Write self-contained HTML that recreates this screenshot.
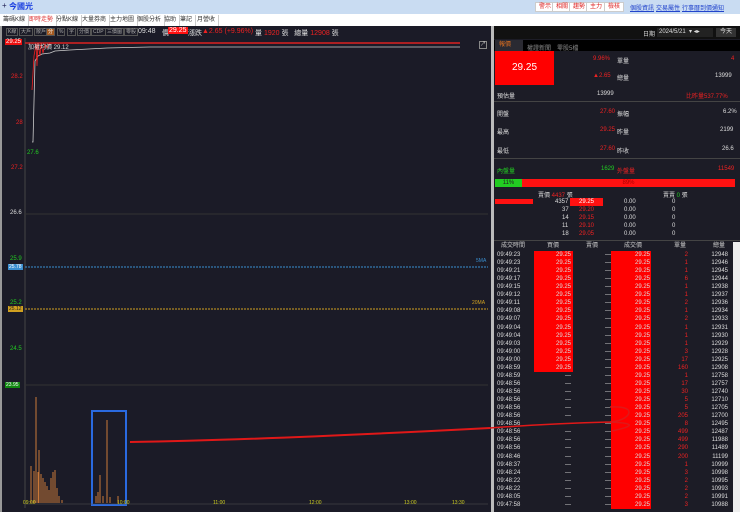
<!DOCTYPE html><html><head><meta charset="utf-8"><style>
*{margin:0;padding:0;box-sizing:border-box}
body{width:740px;height:512px;overflow:hidden;background:#fff;font-family:"Liberation Sans","Noto Sans CJK TC",sans-serif;font-size:6px;position:relative}
.a{position:absolute;white-space:nowrap}
.tb{top:2px;height:10px;border:1px solid #ccc;background:#fff;color:#d22;font-size:6px;line-height:8px;padding:0 3px}
.tab{top:15px;height:11px;line-height:11px;color:#333;font-size:6px;padding:0 3px;border-right:1px solid #ccc}
.bt{top:28px;height:8px;border:1px solid #555;color:#aaa;font-size:5px;line-height:6px;padding:0 1px}
.r{color:#e22}.g{color:#2c2}.w{color:#ddd}
.row{position:absolute;left:495px;width:238px;height:8px;line-height:8px;font-size:6px;color:#ddd}
.row span{position:absolute}
</style></head><body>
<div class="a" style="left:0;top:0;width:740px;height:14px;background:#c9dcf2"></div>
<div class="a" style="left:2px;top:1px;font-size:8px;color:#225;">+</div>
<div class="a" style="left:9px;top:1px;font-size:8px;font-weight:bold;color:#1a3ee0">今國光</div>
<div class="a tb" style="left:535px">警示</div><div class="a tb" style="left:552px">相關</div><div class="a tb" style="left:569px">趨勢</div><div class="a tb" style="left:586px">主力</div><div class="a tb" style="left:604px">檢核</div>
<div class="a" style="left:630px;top:3px;color:#2244cc;text-decoration:underline;font-size:6px">個股資訊</div>
<div class="a" style="left:656px;top:3px;color:#2244cc;text-decoration:underline;font-size:6px">交易屬性</div>
<div class="a" style="left:682px;top:3px;color:#2244cc;text-decoration:underline;font-size:6px">行事曆</div>
<div class="a" style="left:700px;top:3px;color:#2244cc;text-decoration:underline;font-size:6px">到價通知</div>
<div class="a tab" style="left:0">籌碼K線</div><div class="a tab" style="left:26px;color:#d33">即時走勢</div><div class="a tab" style="left:53px">分點K線</div><div class="a tab" style="left:79px">大量券商</div><div class="a tab" style="left:107px">主力地圖</div><div class="a tab" style="left:134px">個股分析</div><div class="a tab" style="left:161px">協助</div><div class="a tab" style="left:177px">筆記</div><div class="a tab" style="left:194px">月營收</div>
<!-- left chart -->
<div class="a" style="left:0;top:26px;width:491px;height:486px;background:#1b1b27;border-left:2px solid #999"></div>
<div class="a bt" style="left:6px">K線</div><div class="a bt" style="left:19px">大戶</div><div class="a bt" style="left:34px">散戶</div><div class="a bt" style="left:46px;background:#a55a20;color:#fff">分</div><div class="a bt" style="left:57px">%</div><div class="a bt" style="left:67px">字</div><div class="a bt" style="left:77px">分價</div><div class="a bt" style="left:91px">CDP</div><div class="a bt" style="left:105px">三價圖</div><div class="a bt" style="left:124px">零股</div>
<div class="a w" style="left:138px;top:28px;font-size:7px">09:48</div>
<div class="a w" style="left:162px;top:28px;font-size:7px">價</div>
<div class="a" style="left:168px;top:27px;background:#f11;color:#fff;font-size:7px;padding:0 1px">29.25</div>
<div class="a w" style="left:188px;top:28px;font-size:7px">漲跌</div>
<div class="a r" style="left:202px;top:28px;font-size:7px">▲2.65 (+9.96%)</div>
<div class="a w" style="left:255px;top:28px;font-size:7px">量 <span class="r">1920</span> 張 &nbsp; 總量 <span class="r">12908</span> 張</div>
<svg class="a" style="left:0;top:26px" width="491" height="486">
<line x1="25" y1="12" x2="25" y2="482" stroke="#444"/>
<line x1="25" y1="188" x2="488" y2="188" stroke="#333"/>
<line x1="25" y1="359" x2="488" y2="359" stroke="#333"/>
<line x1="25" y1="241" x2="488" y2="241" stroke="#3a8fd0" stroke-dasharray="2,1"/>
<line x1="25" y1="283" x2="488" y2="283" stroke="#d0a020" stroke-dasharray="2,1"/>
<line x1="25" y1="17" x2="460" y2="17" stroke="#c22" stroke-width="1.5"/>
<polyline fill="none" stroke="#ccc" stroke-width="0.8" points="32,116 33,116 35,35 38,30 42,28 50,27 55,25 70,24 107,22 150,21 460,21"/>
<polyline fill="none" stroke="#e22" stroke-width="0.8" points="32,64 34,30 36,18 37,40 38,17 40,30 41,17 43,27 45,18 47,22 50,17 460,17"/>
<rect x="92" y="385" width="34" height="94" fill="none" stroke="#2a6ae0" stroke-width="2"/>
<g stroke="#c87838" stroke-width="1">
<line x1="31" y1="477" x2="31" y2="440"/><line x1="34" y1="477" x2="34" y2="445"/><line x1="36" y1="477" x2="36" y2="371"/><line x1="38" y1="477" x2="38" y2="446"/><line x1="39" y1="477" x2="39" y2="424"/><line x1="41" y1="477" x2="41" y2="448"/><line x1="43" y1="477" x2="43" y2="452"/><line x1="45" y1="477" x2="45" y2="456"/><line x1="47" y1="477" x2="47" y2="460"/><line x1="49" y1="477" x2="49" y2="464"/><line x1="51" y1="477" x2="51" y2="452"/><line x1="53" y1="477" x2="53" y2="446"/><line x1="55" y1="477" x2="55" y2="444"/><line x1="57" y1="477" x2="57" y2="462"/><line x1="59" y1="477" x2="59" y2="470"/><line x1="62" y1="477" x2="62" y2="474"/><line x1="96" y1="477" x2="96" y2="470"/><line x1="98" y1="477" x2="98" y2="466"/><line x1="100" y1="477" x2="100" y2="449"/><line x1="103" y1="477" x2="103" y2="470"/><line x1="107" y1="477" x2="107" y2="394"/><line x1="110" y1="477" x2="110" y2="471"/><line x1="118" y1="477" x2="118" y2="470"/>
</g>
<line x1="25" y1="478" x2="488" y2="478" stroke="#555" stroke-width="0.5"/>
<path d="M130,416 C200,415 300,412 490,402" fill="none" stroke="#e01818" stroke-width="2"/>
</svg>
<div class="a" style="left:5px;top:39px;background:#e11;color:#fff;font-size:6px;padding:0 1px">29.25</div>
<div class="a w" style="left:28px;top:42px;font-size:6px">加權均價 29.12</div>
<div class="a r" style="left:11px;top:74px">28.2</div>
<div class="a r" style="left:16px;top:120px">28</div>
<div class="a g" style="left:27px;top:150px">27.6</div>
<div class="a r" style="left:11px;top:165px">27.2</div>
<div class="a w" style="left:10px;top:210px">26.6</div>
<div class="a g" style="left:10px;top:256px">25.9</div>
<div class="a" style="left:8px;top:264px;background:#3a8fd0;color:#fff;font-size:5px;padding:0 1px">25.78</div>
<div class="a" style="left:476px;top:258px;color:#3a8fd0;font-size:5px">5MA</div>
<div class="a g" style="left:10px;top:300px">25.2</div>
<div class="a" style="left:8px;top:306px;background:#d0a020;color:#222;font-size:5px;padding:0 1px">25.12</div>
<div class="a" style="left:472px;top:300px;color:#d0a020;font-size:5px">20MA</div>
<div class="a g" style="left:10px;top:346px">24.5</div>
<div class="a" style="left:5px;top:382px;background:#181;color:#fff;font-size:5px;padding:0 1px">23.95</div>
<div class="a" style="left:23px;top:500px;color:#cc2;font-size:5px">09:00</div>
<div class="a" style="left:117px;top:500px;color:#cc2;font-size:5px">10:00</div>
<div class="a" style="left:213px;top:500px;color:#cc2;font-size:5px">11:00</div>
<div class="a" style="left:309px;top:500px;color:#cc2;font-size:5px">12:00</div>
<div class="a" style="left:404px;top:500px;color:#cc2;font-size:5px">13:00</div>
<div class="a" style="left:452px;top:500px;color:#cc2;font-size:5px">13:30</div>
<div class="a" style="left:479px;top:41px;width:8px;height:8px;border:1px solid #888;color:#ccc;font-size:6px;line-height:6px;text-align:center">↗</div>
<!-- right panel -->
<div class="a" style="left:491px;top:26px;width:3px;height:486px;background:#bbb"></div>
<div class="a" style="left:494px;top:26px;width:246px;height:486px;background:#1c1c26"></div>
<div class="a" style="left:494px;top:26px;width:246px;height:13px;background:#111"></div>
<div class="a w" style="left:643px;top:29px;font-size:6px">日期</div>
<div class="a" style="left:657px;top:28px;width:56px;height:9px;background:#222;color:#ddd;font-size:6px;line-height:9px;padding-left:2px">2024/5/21 &nbsp;▾ ◂▸</div>
<div class="a" style="left:716px;top:28px;width:20px;height:9px;background:#333;color:#ddd;font-size:6px;line-height:9px;text-align:center">今天</div>
<div class="a" style="left:494px;top:40px;width:246px;height:11px;background:#000"></div>
<div class="a" style="left:495px;top:40px;width:28px;height:11px;background:#2a2a32;color:#e07020;font-size:6px;line-height:11px;padding-left:4px">報價</div>
<div class="a" style="left:527px;top:43px;color:#888">權證</div><div class="a" style="left:539px;top:43px;color:#888">新聞</div><div class="a" style="left:557px;top:43px;color:#888">零股5檔</div>
<div class="a" style="left:495px;top:51px;width:59px;height:34px;background:#f00;color:#fff;font-size:10px;line-height:34px;text-align:center">29.25</div>
<div class="a r" style="left:593px;top:56px">9.96%</div><div class="a w" style="left:617px;top:56px">單量</div><div class="a r" style="left:731px;top:56px">4</div>
<div class="a r" style="left:593px;top:73px">▲2.65</div><div class="a w" style="left:617px;top:73px">總量</div><div class="a w" style="left:715px;top:73px">13999</div>
<div class="a w" style="left:497px;top:91px">預估量</div><div class="a w" style="left:597px;top:91px">13999</div><div class="a r" style="left:686px;top:91px">比昨量537.77%</div>
<div class="a" style="left:494px;top:101px;width:246px;height:1px;background:#444"></div>
<div class="a w" style="left:497px;top:109px">開盤</div><div class="a r" style="left:600px;top:109px">27.60</div><div class="a w" style="left:617px;top:109px">振幅</div><div class="a w" style="left:723px;top:109px">6.2%</div>
<div class="a w" style="left:497px;top:127px">最高</div><div class="a r" style="left:600px;top:127px">29.25</div><div class="a w" style="left:617px;top:127px">昨量</div><div class="a w" style="left:720px;top:127px">2199</div>
<div class="a w" style="left:497px;top:146px">最低</div><div class="a r" style="left:600px;top:146px">27.60</div><div class="a w" style="left:617px;top:146px">昨收</div><div class="a w" style="left:722px;top:146px">26.6</div>
<div class="a" style="left:494px;top:158px;width:246px;height:1px;background:#444"></div>
<div class="a g" style="left:497px;top:166px">內盤量</div><div class="a g" style="left:601px;top:166px">1629</div><div class="a r" style="left:617px;top:166px">外盤量</div><div class="a r" style="left:718px;top:166px">11549</div>
<div class="a" style="left:495px;top:179px;width:27px;height:8px;background:#2c2;color:#222;font-size:6px;text-align:center;line-height:8px">11%</div>
<div class="a" style="left:522px;top:179px;width:213px;height:8px;background:#f11;color:#a00;font-size:6px;text-align:center;line-height:8px">89%</div>
<div class="a w" style="left:538px;top:190px">賣價 <span class="r">4437</span> 張</div><div class="a w" style="left:663px;top:190px">賣賣 <span class="g">0</span> 張</div>
<div class="a" style="left:495px;top:199px;width:38px;height:5px;background:#f11"></div>
<div class="a" style="left:570px;top:198px;width:33px;height:8px;background:#f11"></div>
<div class="row" style="top:198px"><span style="left:60px">4357</span><span style="left:84px;color:#fff">29.25</span><span style="left:129px">0.00</span><span style="left:177px">0</span></div>
<div class="row" style="top:206px"><span style="left:67px">37</span><span style="left:84px;color:#e22">29.20</span><span style="left:129px">0.00</span><span style="left:177px">0</span></div>
<div class="row" style="top:214px"><span style="left:67px">14</span><span style="left:84px;color:#e22">29.15</span><span style="left:129px">0.00</span><span style="left:177px">0</span></div>
<div class="row" style="top:222px"><span style="left:67px">11</span><span style="left:84px;color:#e22">29.10</span><span style="left:129px">0.00</span><span style="left:177px">0</span></div>
<div class="row" style="top:230px"><span style="left:67px">18</span><span style="left:84px;color:#e22">29.05</span><span style="left:129px">0.00</span><span style="left:177px">0</span></div>
<div class="a" style="left:494px;top:240px;width:246px;height:1px;background:#444"></div>
<div class="a" style="left:534px;top:251px;width:39px;height:121px;background:#f00"></div>
<div class="a" style="left:611px;top:251px;width:40px;height:258px;background:#f00"></div>
<div class="a" style="left:733px;top:242px;width:7px;height:270px;background:#eee"></div>
<div class="row" style="top:242px;color:#ccc"><span style="left:6px">成交時間</span><span style="left:52px">買價</span><span style="left:91px">賣價</span><span style="left:129px">成交價</span><span style="left:179px">單量</span><span style="left:218px">總量</span></div>
<div id="tb"></div>
<script>
var d=[["09:49:23",1,2,12948],["09:49:23",1,1,12946],["09:49:21",1,1,12945],["09:49:17",1,6,12944],["09:49:15",1,1,12938],["09:49:12",1,1,12937],["09:49:11",1,2,12936],["09:49:08",1,1,12934],["09:49:07",1,2,12933],["09:49:04",1,1,12931],["09:49:04",1,1,12930],["09:49:03",1,1,12929],["09:49:00",1,3,12928],["09:49:00",1,17,12925],["09:48:59",1,160,12908],["09:48:59",0,1,12758],["09:48:56",0,17,12757],["09:48:56",0,30,12740],["09:48:56",0,5,12710],["09:48:56",0,5,12705],["09:48:56",0,205,12700],["09:48:56",0,8,12495],["09:48:56",0,499,12487],["09:48:56",0,499,11988],["09:48:56",0,290,11489],["09:48:46",0,200,11199],["09:48:37",0,1,10999],["09:48:24",0,3,10998],["09:48:22",0,2,10995],["09:48:22",0,2,10993],["09:48:05",0,2,10991],["09:47:58",0,3,10988]];
var h="";d.forEach(function(r,i){var t=251+i*8.06;h+='<div class="row" style="top:'+t+'px"><span style="left:2px">'+r[0]+'</span><span style="right:162px">'+(r[1]?'29.25':'—')+'</span><span style="left:110px">—</span><span style="right:83px">29.25</span><span style="right:45px;color:#e22">'+r[2]+'</span><span style="right:5px">'+r[3]+'</span></div>'});document.getElementById("tb").innerHTML=h;
</script>
<svg class="a" style="left:490px;top:395px" width="180" height="50"><path d="M0,33 C40,30 80,28 120,27 C140,26 150,10 120,12 M120,27 C140,28 150,30 122,36" fill="none" stroke="#e01818" stroke-width="1.5"/></svg>
</body></html>
